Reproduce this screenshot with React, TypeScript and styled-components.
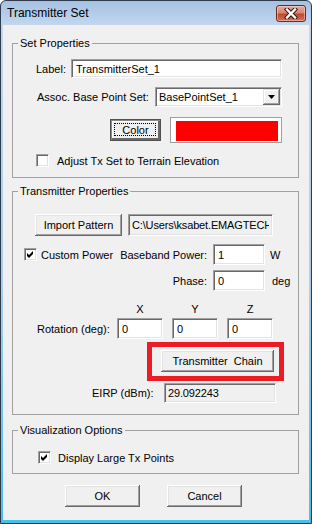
import React from 'react'
import styled, { createGlobalStyle } from 'styled-components'

const GlobalStyle = createGlobalStyle`
html, body {
    margin: 0;
    padding: 0;
    background: #ffffff;
}
body {
    font-family: "Liberation Sans", Arial, sans-serif;
    font-size: 11px;
    color: #000000;
}
* {
    box-sizing: border-box;
}
`

const Window = styled.div`
width: 312px;
height: 524px;
display: flex;
flex-direction: column;
border: 1px solid #2d3b4d;
border-radius: 6px 6px 0 0;
overflow: hidden;
background: linear-gradient(180deg, #a6c1e3 0px, #c2d7ee 24px, #a9cdec 55%, #46c0ea 100%);
`

const TitleBar = styled.div`
height: 24px;
flex: none;
display: flex;
align-items: center;
justify-content: space-between;
padding: 0 5px 0 6px;
`

const Title = styled.span`
font-size: 12px;
color: #000000;
`

const CloseButton = styled.div`
width: 30px;
height: 17px;
display: flex;
align-items: center;
justify-content: center;
border: 1px solid #6b2a20;
border-radius: 3px;
background: linear-gradient(180deg, #e6ac9e 0%, #d7866f 45%, #c14a30 55%, #d07058 100%);
box-shadow: inset 0 0 0 1px rgba(255, 220, 210, 0.5);
`

const Client = styled.div`
flex: 1;
margin: 0 2px 3px 2px;
background: #f0f0f0;
display: flex;
flex-direction: column;
padding: 0 10px 0 9px;
`

const Group = styled.fieldset<{ $mt: number; $pb: number }>`
margin: ${p => p.$mt}px 0 0 0;
padding: 0 0 ${p => p.$pb}px 0;
min-width: 0;
border: 1px solid #a0a0a0;
`

const Caption = styled.legend`
margin-left: 5px;
padding: 0 2px;
font-size: 11px;
line-height: 13px;
`

const Row = styled.div<{ $mt: number; $h: number; $pl?: number; $gap?: number }>`
display: flex;
align-items: center;
height: ${p => p.$h}px;
margin-top: ${p => p.$mt}px;
padding-left: ${p => p.$pl ?? 0}px;
gap: ${p => p.$gap ?? 0}px;
`

const FieldLabel = styled.span<{ $w: number; $right?: boolean }>`
flex: none;
width: ${p => p.$w}px;
text-align: ${p => (p.$right ? 'right' : 'left')};
white-space: nowrap;
`

const Cell = styled.div<{ $w: number; $pl?: number }>`
flex: none;
width: ${p => p.$w}px;
padding-left: ${p => p.$pl ?? 0}px;
display: flex;
align-items: center;
gap: 4px;
white-space: nowrap;
`

const Unit = styled.span<{ $ml: number }>`
margin-left: ${p => p.$ml}px;
`

const TextBox = styled.input<{ $w: number; $ro?: boolean }>`
flex: none;
width: ${p => p.$w}px;
height: 100%;
margin: 0;
padding: 0 ${p => (p.$ro ? 3 : 4)}px;
font: inherit;
letter-spacing: ${p => (p.$ro ? '-0.15px' : 'normal')};
color: #000000;
background: ${p => (p.$ro ? '#f0f0f0' : '#ffffff')};
border: 1px solid;
border-color: #a0a0a0 #ffffff #ffffff #a0a0a0;
box-shadow: inset 1px 1px #696969, inset -1px -1px #e3e3e3;
outline: none;
overflow: hidden;
text-overflow: clip;
`

const Combo = styled.div<{ $w: number }>`
flex: none;
width: ${p => p.$w}px;
height: 100%;
display: flex;
align-items: center;
padding: 1px;
background: #ffffff;
border: 1px solid;
border-color: #a0a0a0 #ffffff #ffffff #a0a0a0;
box-shadow: inset 1px 1px #696969, inset -1px -1px #e3e3e3;
`

const ComboText = styled.span`
flex: 1;
padding-left: 2px;
white-space: nowrap;
`

const ComboArrow = styled.div`
flex: none;
width: 17px;
height: 100%;
display: flex;
align-items: center;
justify-content: center;
background: #f0f0f0;
box-shadow: inset -1px -1px #696969, inset 1px 1px #e3e3e3, inset -2px -2px #a0a0a0, inset 2px 2px #ffffff;
`

const Button = styled.button<{ $w: number; $h?: number }>`
flex: none;
width: ${p => p.$w}px;
height: ${p => p.$h ?? 22}px;
margin: 0;
padding: 0;
font: inherit;
color: #000000;
white-space: pre;
background: #f0f0f0;
border: none;
box-shadow: inset -1px -1px #696969, inset 1px 1px #ffffff, inset -2px -2px #a0a0a0, inset 2px 2px #e3e3e3;
`

const DefaultButton = styled(Button)`
position: relative;
border: 1px solid #505050;
box-shadow: inset 1px 1px #8a8a8a, inset -2px -2px #6a6a6a, inset 2px 2px #ffffff;

&::after {
    content: '';
    position: absolute;
    inset: 3px 4px 4px 3px;
    border: 1px dotted #000000;
}
`

const Swatch = styled.div`
flex: none;
width: 112px;
height: 26px;
padding: 3px 3px 1px 5px;
background: #ffffff;
border: 1px solid #a0a0a0;
`

const SwatchFill = styled.div<{ $color: string }>`
width: 100%;
height: 100%;
background: ${p => p.$color};
`

const Box = styled.span`
flex: none;
width: 13px;
height: 13px;
display: flex;
background: #ffffff;
border: 1px solid;
border-color: #a0a0a0 #ffffff #ffffff #a0a0a0;
box-shadow: inset 1px 1px #696969, inset -1px -1px #e3e3e3;
`

const Triplet = styled.div`
flex: none;
display: grid;
grid-template-columns: 46px 46px 46px;
column-gap: 9px;
height: 100%;
align-items: center;
`

const Axis = styled.span`
text-align: center;
`

const Highlight = styled.div`
flex: none;
width: 137px;
height: 100%;
border: 5px solid #ec1c24;
padding: 3px 0 0 9px;
`

const CheckBox = ({ checked }: { checked?: boolean }) => (
    <Box>
        {checked && (
            <svg width="11" height="11" viewBox="0 0 11 11">
                <polygon points="2,4 4,6 8,2 8,5 4,9 2,7" fill="#000000" />
            </svg>
        )}
    </Box>
)

const App = () => {
    return (
        <>
            <GlobalStyle />
            <Window>
                <TitleBar>
                    <Title>Transmitter Set</Title>
                    <CloseButton>
                        <svg width="14" height="11" viewBox="0 0 14 11">
                            <path d="M3 1.5 L11 9.5 M11 1.5 L3 9.5" stroke="#3b1510" strokeWidth="4.4" strokeLinecap="square" />
                            <path d="M3 1.5 L11 9.5 M11 1.5 L3 9.5" stroke="#ffffff" strokeWidth="2.4" strokeLinecap="square" />
                        </svg>
                    </CloseButton>
                </TitleBar>

                <Client>
                    <Group $mt={12} $pb={10}>
                        <Caption>Set Properties</Caption>
                        <Row $mt={9} $h={19} $pl={23}>
                            <FieldLabel $w={35}>Label:</FieldLabel>
                            <TextBox $w={211} value="TransmitterSet_1" readOnly />
                        </Row>
                        <Row $mt={9} $h={20} $pl={24}>
                            <FieldLabel $w={118}>Assoc. Base Point Set:</FieldLabel>
                            <Combo $w={127}>
                                <ComboText>BasePointSet_1</ComboText>
                                <ComboArrow>
                                    <svg width="7" height="4" viewBox="0 0 7 4">
                                        <polygon points="0,0 7,0 3.5,4" fill="#000000" />
                                    </svg>
                                </ComboArrow>
                            </Combo>
                        </Row>
                        <Row $mt={10} $h={26} $pl={97} $gap={9}>
                            <DefaultButton $w={51}>Color</DefaultButton>
                            <Swatch>
                                <SwatchFill $color="#ff0000" />
                            </Swatch>
                        </Row>
                        <Row $mt={11} $h={13} $pl={23} $gap={8}>
                            <CheckBox />
                            <span>Adjust Tx Set to Terrain Elevation</span>
                        </Row>
                    </Group>

                    <Group $mt={7} $pb={11}>
                        <Caption>Transmitter Properties</Caption>
                        <Row $mt={16} $h={22} $pl={22} $gap={6}>
                            <Button $w={87}>Import Pattern</Button>
                            <TextBox $w={145} $ro value={'C:\\Users\\ksabet.EMAGTECH\\Documents'} readOnly />
                        </Row>
                        <Row $mt={8} $h={21}>
                            <Cell $w={97} $pl={11}>
                                <CheckBox checked />
                                <span>Custom Power</span>
                            </Cell>
                            <FieldLabel $w={97} $right>Baseband Power:</FieldLabel>
                            <Unit $ml={6} />
                            <TextBox $w={52} value="1" readOnly />
                            <Unit $ml={5}>W</Unit>
                        </Row>
                        <Row $mt={5} $h={21}>
                            <Cell $w={97} />
                            <FieldLabel $w={97} $right>Phase:</FieldLabel>
                            <Unit $ml={6} />
                            <TextBox $w={52} value="0" readOnly />
                            <Unit $ml={7}>deg</Unit>
                        </Row>
                        <Row $mt={11} $h={13} $pl={104}>
                            <Triplet>
                                <Axis>X</Axis>
                                <Axis>Y</Axis>
                                <Axis>Z</Axis>
                            </Triplet>
                        </Row>
                        <Row $mt={3} $h={21} $pl={24}>
                            <FieldLabel $w={80}>Rotation (deg):</FieldLabel>
                            <Triplet>
                                <TextBox $w={46} value="0" readOnly />
                                <TextBox $w={46} value="0" readOnly />
                                <TextBox $w={46} value="0" readOnly />
                            </Triplet>
                        </Row>
                        <Row $mt={3} $h={39} $pl={134}>
                            <Highlight>
                                <Button $w={113}>{'Transmitter  Chain'}</Button>
                            </Highlight>
                        </Row>
                        <Row $mt={2} $h={20} $pl={79}>
                            <FieldLabel $w={72}>EIRP (dBm):</FieldLabel>
                            <TextBox $w={112} $ro value="29.092243" readOnly />
                        </Row>
                    </Group>

                    <Group $mt={9} $pb={9}>
                        <Caption>Visualization Options</Caption>
                        <Row $mt={14} $h={13} $pl={25} $gap={7}>
                            <CheckBox checked />
                            <span>Display Large Tx Points</span>
                        </Row>
                    </Group>

                    <Row $mt={11} $h={22} $pl={53} $gap={27}>
                        <Button $w={75}>OK</Button>
                        <Button $w={75}>Cancel</Button>
                    </Row>
                </Client>
            </Window>
        </>
    )
}

export default App
